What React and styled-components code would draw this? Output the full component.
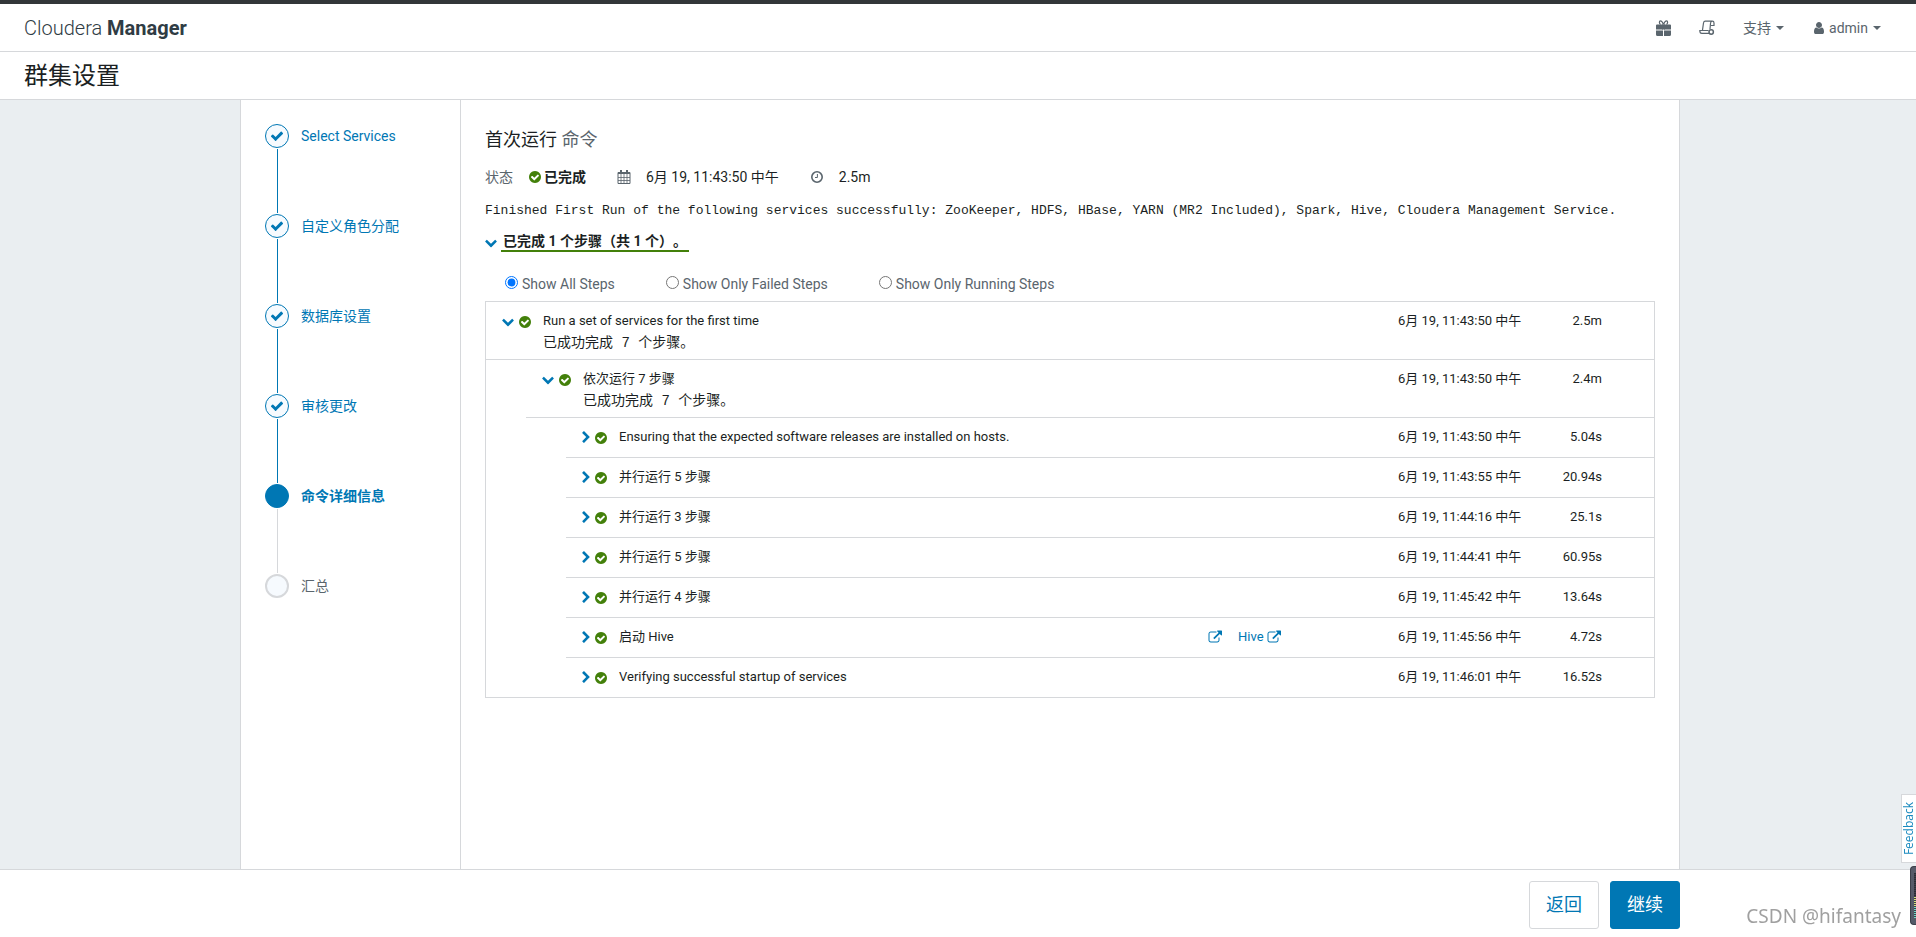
import React, { useState } from "react"
import styled, { createGlobalStyle } from "styled-components";

const GlobalStyle = createGlobalStyle`
    body {
        margin: 0;
        background: #fff;
        color: #1b1f23;
        font-family: Roboto, "Noto Sans CJK SC", sans-serif;
        font-size: 13px;
        line-height: 20px;
        text-spacing-trim: space-all;
    }

    *, *::before, *::after {
        box-sizing: border-box;
    }
`;

const Page = styled.div`
    min-height: 100vh;
    display: flex;
    flex-direction: column;
    border-top: 4px solid #323639;
`;

const TopBar = styled.header`
    display: flex;
    align-items: center;
    justify-content: space-between;
    height: 48px;
    padding: 0 35px 0 24px;
    border-bottom: 1px solid #d6d8db;
`;

const Brand = styled.div`
    font-size: 20px;
    font-weight: 300;
    line-height: 24px;
    color: #2f3c44;

    b {
        font-weight: 700;
    }
`;

const TopMenu = styled.nav`
    display: flex;
    align-items: center;
    gap: 28px;
`;

const MenuButton = styled.button`
    display: flex;
    align-items: center;
    gap: 5px;
    padding: 0;
    border: 0;
    background: none;
    color: #5a656d;
    font: inherit;
    font-size: 14px;
    cursor: pointer;
`;

const Caret = styled.span`
    width: 8px;
    border: 4px solid transparent;
    border-top-color: #5a656d;
    border-bottom: 0;
`;

const UserName = styled.span`
    display: flex;
    align-items: center;
    gap: 3px;
`;

const PageTitle = styled.h1`
    margin: 0;
    height: 48px;
    padding: 0 24px;
    border-bottom: 1px solid #d6d8db;
    font-size: 24px;
    font-weight: 400;
    line-height: 48px;
`;

const Body = styled.div`
    flex: 1;
    display: flex;
    padding: 0 236px 0 240px;
    background: #eaeef1;
`;

const Wizard = styled.main`
    flex: 1;
    display: flex;
    min-width: 0;
    background: #fff;
    border: solid #d6d8db;
    border-width: 0 1px;
`;

const StepNav = styled.ol`
    flex: 0 0 220px;
    margin: 0;
    padding: 24px;
    border-right: 1px solid #d6d8db;
    list-style: none;
`;

const StepItem = styled.li`
    display: grid;
    grid-template-columns: 24px 1fr;
    grid-template-rows: 24px 66px;
    column-gap: 12px;
    align-items: center;
    justify-items: start;
`;

const StepDot = styled.span`
    display: flex;
    align-items: center;
    justify-content: center;
    width: 24px;
    height: 24px;
    border-radius: 50%;
    border: ${(props) => (props.$state === "todo" ? "2px solid #d6d8db" : "1px solid #0077b4")};
    background: ${(props) => (props.$state === "current" ? "#0077b4" : "#f6fafe")};
    color: #0077b4;
`;

const StepLine = styled.span`
    justify-self: center;
    width: 1px;
    height: 64px;
    background: ${(props) => (props.$done ? "#0077b4" : "#d6d8db")};
`;

const StepLink = styled.a`
    color: ${(props) => (props.$state === "todo" ? "#5a656d" : "#0077b4")};
    font-size: 14px;
    font-weight: ${(props) => (props.$state === "current" ? 700 : 400)};
    text-decoration: none;
`;

const Content = styled.section`
    flex: 1;
    min-width: 0;
    padding: 28px 24px 24px;
`;

const Heading = styled.h2`
    margin: 0 0 15px;
    font-size: 18px;
    font-weight: 400;
    line-height: 24px;

    small {
        font-size: inherit;
        color: #5a656d;
    }
`;

const StatusRow = styled.div`
    display: flex;
    align-items: center;
    height: 20px;
    font-size: 14px;
`;

const StatusLabel = styled.span`
    margin-right: 15px;
    color: #5a656d;
`;

const StatusItem = styled.span`
    display: flex;
    align-items: center;
    gap: ${(props) => (props.$bold ? "2px" : "15px")};
    margin-right: 31px;
    font-weight: ${(props) => (props.$bold ? 700 : 400)};
`;

const Message = styled.p`
    margin: 14px 0 11px;
    font-family: "Liberation Mono", "Noto Sans CJK SC", monospace;
    font-size: 13px;
`;

const Summary = styled.button`
    display: flex;
    align-items: center;
    gap: 4px;
    height: 20px;
    padding: 0;
    border: 0;
    background: none;
    color: #1b1f23;
    font: inherit;
    font-size: 14px;
    font-weight: 700;
    line-height: 18px;
    cursor: pointer;
`;

const SummaryText = styled.span`
    height: 20px;
    padding: 0 2px;
    border-bottom: 2px solid #43800a;
`;

const Filters = styled.div`
    display: flex;
    gap: 51px;
    padding: 22px 0 7px 20px;
`;

const FilterLabel = styled.label`
    display: flex;
    align-items: center;
    gap: 4px;
    height: 20px;
    font-size: 14px;
    color: #5a656d;

    input {
        width: 13px;
        height: 13px;
        margin: 0 0 3px;
    }
`;

const StepList = styled.div`
    border: 1px solid #d6d8db;
`;

const Row = styled.div`
    display: flex;
    align-items: flex-start;
    height: ${(props) => (props.$detail ? "58px" : "40px")};
    margin-left: ${(props) => props.$level * 40}px;
    padding: 9px 52px 0 16px;
    border-bottom: 1px solid #d6d8db;

    &:last-child {
        height: 39px;
        border-bottom: 0;
    }
`;

const Toggle = styled.button`
    display: flex;
    align-items: center;
    gap: 4px;
    height: 20px;
    margin-right: 11px;
    padding: 0;
    border: 0;
    background: none;
    color: #0077b4;
    cursor: pointer;

    svg:last-child {
        margin-top: 2px;
    }
`;

const RowText = styled.div`
    flex: 1;
    min-width: 0;
`;

const RowDetail = styled.div`
    font-family: "Liberation Mono", "Noto Sans CJK SC", monospace;
    font-size: 14px;
    line-height: 24px;
`;

const RowLinks = styled.div`
    display: flex;
    gap: 16px;
    width: 190px;
`;

const RowLink = styled.a`
    display: flex;
    align-items: center;
    gap: 3px;
    color: #0077b4;
    text-decoration: none;
`;

const RowDate = styled.div`
    width: 124px;
`;

const RowDuration = styled.div`
    width: 80px;
    text-align: right;
`;

const Footer = styled.footer`
    display: flex;
    justify-content: flex-end;
    gap: 11px;
    height: 68px;
    padding: 11px 236px 0 0;
    border-top: 1px solid #d6d8db;
`;

const FooterButton = styled.button`
    width: 70px;
    height: 48px;
    padding: 0;
    border: 1px solid ${(props) => (props.$primary ? "#0077b4" : "#d6d8db")};
    border-radius: 3px;
    background: ${(props) => (props.$primary ? "#0077b4" : "#fff")};
    color: ${(props) => (props.$primary ? "#fff" : "#0077b4")};
    font: inherit;
    font-size: 18px;
    cursor: pointer;
`;

const Feedback = styled.button`
    position: fixed;
    right: 0;
    bottom: 74px;
    width: 15px;
    height: 69px;
    padding: 0;
    border: 1px solid #d6d8db;
    border-right: 0;
    background: #fff;
    color: #1a8abf;
    font: 12px/14px "Open Sans", sans-serif;
    writing-mode: sideways-lr;
`;

const Meter = styled.div`
    position: fixed;
    right: 0;
    bottom: 12px;
    width: 6px;
    height: 59px;
    padding: 6px 0 6px 3px;
    border: 1px solid #3c3f4a;
    border-right: 0;
    border-radius: 4px 0 0 4px;
    background: #555a68;

    &::before {
        content: "";
        display: block;
        height: 100%;
        background:
            repeating-linear-gradient(transparent 0 1px, #3c3f4a 1px 2px),
            linear-gradient(#2b2d35 0 52%, #d3e07a 52% 75%, #6fd6c2 75%);
    }
`;

const Watermark = styled.div`
    position: fixed;
    right: 15px;
    bottom: 8px;
    font: 19px/26px "Noto Sans", sans-serif;
    color: #a0a0a0;
`;

const Svg = ({ size = 14, width = size, box = "0 0 1792 1792", d, color = "currentColor" }) => (
    <svg width={width} height={size} viewBox={box} fill={color} aria-hidden="true">
        <path d={d} />
    </svg>
);

const CheckIcon = () => (
    <Svg d="M1671 566q0 40-28 68l-724 724-136 136q-28 28-68 28t-68-28l-136-136-362-362q-28-28-28-68t28-68l136-136q28-28 68-28t68 28l294 295 656-657q28-28 68-28t68 28l136 136q28 28 28 68z" />
);

const CheckCircle = () => (
    <Svg
        color="#43800a"
        d="M1412 734q0-28-18-46l-91-90q-19-19-45-19t-45 19l-408 407-226-226q-19-19-45-19t-45 19l-91 90q-18 18-18 46 0 27 18 45l362 362q19 19 45 19 27 0 46-19l543-543q18-18 18-45zm252 162q0 209-103 385.5t-279.5 279.5-385.5 103-385.5-103-279.5-279.5-103-385.5 103-385.5 279.5-279.5 385.5-103 385.5 103 279.5 279.5 103 385.5z"
    />
);

const UserIcon = () => (
    <Svg d="M1536 1399q0 109-62.5 187t-150.5 78h-854q-88 0-150.5-78t-62.5-187q0-85 8.5-160.5t31.5-152 58.5-131 94-89 134.5-34.5q131 128 313 128t313-128q76 0 134.5 34.5t94 89 58.5 131 31.5 152 8.5 160.5zm-256-887q0 159-112.5 271.5t-271.5 112.5-271.5-112.5-112.5-271.5 112.5-271.5 271.5-112.5 271.5 112.5 112.5 271.5z" />
);

const LinkIcon = () => (
    <Svg d="M1472 989v320q0 119-84.5 203.5t-203.5 84.5h-832q-119 0-203.5-84.5t-84.5-203.5v-832q0-119 84.5-203.5t203.5-84.5h704q14 0 23 9t9 23v64q0 14-9 23t-23 9h-704q-66 0-113 47t-47 113v832q0 66 47 113t113 47h832q66 0 113-47t47-113v-320q0-14 9-23t23-9h64q14 0 23 9t9 23zm320-864v512q0 26-19 45t-45 19-45-19l-176-176-652 652q-10 10-23 10t-23-10l-114-114q-10-10-10-23t10-23l652-652-176-176q-19-19-19-45t19-45 45-19h512q26 0 45 19t19 45z" />
);

const Chevron = ({ open }) => (
    open ? (
        <Svg
            size={13}
            width={12}
            box="68 0 1656 1792"
            color="#0077b4"
            d="M1683 808l-742 741q-19 19-45 19t-45-19l-742-741q-19-19-19-45.5t19-45.5l166-165q19-19 45-19t45 19l531 531 531-531q19-19 45-19t45 19l166 165q19 19 19 45.5t-19 45.5z"
        />
    ) : (
        <Svg
            size={13}
            width={8}
            box="312 0 1104 1792"
            color="#0077b4"
            d="M1363 877l-742 742q-19 19-45 19t-45-19l-166-166q-19-19-19-45t19-45l531-531-531-531q-19-19-19-45t19-45l166-166q19-19 45-19t45 19l742 742q19 19 19 45t-19 45z"
        />
    )
);

const CalendarIcon = () => (
    <svg width="14" height="14" viewBox="0 0 14 14" fill="none" stroke="#5a656d" aria-hidden="true">
        <path d="M1 2.500h12v11H1z" />
        <path strokeWidth="2" d="M1 3h12" />
        <path strokeWidth="2" d="M4 0v3.500M10 0v3.500" />
        <path strokeWidth="0.8" d="M1 7.500h12M1 10.500h12M4 4v9.500M7 4v9.500M10 4v9.500" />
    </svg>
);

const ClockIcon = () => (
    <svg width="14" height="14" viewBox="0 0 14 14" fill="none" stroke="#5a656d" aria-hidden="true">
        <circle cx="7" cy="7" r="5.2" strokeWidth="1.6" />
        <path d="M7.4 4v3.5H5" />
    </svg>
);

const GiftIcon = () => (
    <svg width="15" height="16" viewBox="0 0 15 16" fill="#5a656d" aria-hidden="true">
        <path fill="none" stroke="#5a656d" strokeWidth="1.200" d="M7.500 4.500C6.500 2 5.500.8 4.500.8 3 .8 3 3.500 4.500 4.500M7.500 4.500C8.500 2 9.500.8 10.500.8c1.500 0 1.500 2.700 0 3.700" />
        <path d="M1 4.500h6v5H0v-4q0-1 1-1zM8 4.500h6q1 0 1 1v4H8zM0 10.500h7V16H1.500Q0 16 0 14.500zM8 10.500h7v4q0 1.500-1.500 1.500H8z" />
        <path d="M6 4.500h3v5H6z" />
    </svg>
);

const ScrollIcon = () => (
    <svg width="16" height="16" viewBox="0 0 16 16" fill="none" stroke="#5a656d" strokeWidth="1.200" aria-hidden="true">
        <path d="M3.500 10L4.500 3Q4.800 1.200 6.300 1.200H13.300Q15 1.200 15 3V5.500H12M13 1.200Q11.600 1.500 11.500 3.500L11 9" />
        <path d="M9.500 10.500H.8Q.8 13.400 2.800 13.400H10.500" />
        <circle cx="12.2" cy="12" r="2.2" strokeWidth="1.500" />
    </svg>
);

const steps = [
    { label: "Select Services", state: "done" },
    { label: "自定义角色分配", state: "done" },
    { label: "数据库设置", state: "done" },
    { label: "审核更改", state: "done" },
    { label: "命令详细信息", state: "current" },
    { label: "汇总", state: "todo" },
];

const filters = ["Show All Steps", "Show Only Failed Steps", "Show Only Running Steps"];

const rows = [
    { level: 0, open: true, text: "Run a set of services for the first time", detail: "已成功完成 7 个步骤。", time: "11:43:50", duration: "2.5m" },
    { level: 1, open: true, text: "依次运行 7 步骤", detail: "已成功完成 7 个步骤。", time: "11:43:50", duration: "2.4m" },
    { level: 2, text: "Ensuring that the expected software releases are installed on hosts.", time: "11:43:50", duration: "5.04s" },
    { level: 2, text: "并行运行 5 步骤", time: "11:43:55", duration: "20.94s" },
    { level: 2, text: "并行运行 3 步骤", time: "11:44:16", duration: "25.1s" },
    { level: 2, text: "并行运行 5 步骤", time: "11:44:41", duration: "60.95s" },
    { level: 2, text: "并行运行 4 步骤", time: "11:45:42", duration: "13.64s" },
    { level: 2, text: "启动 Hive", link: "Hive", time: "11:45:56", duration: "4.72s" },
    { level: 2, text: "Verifying successful startup of services", time: "11:46:01", duration: "16.52s" },
];

function App() {
    const [filter, setFilter] = useState(filters[0]);

    return (
        <Page>
            <GlobalStyle />
            <TopBar>
                <Brand>Cloudera <b>Manager</b></Brand>
                <TopMenu>
                    <MenuButton aria-label="Gift"><GiftIcon /></MenuButton>
                    <MenuButton aria-label="Commands"><ScrollIcon /></MenuButton>
                    <MenuButton>支持<Caret /></MenuButton>
                    <MenuButton><UserName><UserIcon />admin</UserName><Caret /></MenuButton>
                </TopMenu>
            </TopBar>
            <PageTitle>群集设置</PageTitle>
            <Body>
                <Wizard>
                    <StepNav>
                        {steps.map((step, i) => (
                            <StepItem key={step.label}>
                                <StepDot $state={step.state}>{step.state === "done" && <CheckIcon />}</StepDot>
                                <StepLink href="#" $state={step.state}>{step.label}</StepLink>
                                {i < steps.length - 1 && <StepLine $done={step.state === "done"} />}
                            </StepItem>
                        ))}
                    </StepNav>
                    <Content>
                        <Heading>首次运行 <small>命令</small></Heading>
                        <StatusRow>
                            <StatusLabel>状态</StatusLabel>
                            <StatusItem $bold><CheckCircle />已完成</StatusItem>
                            <StatusItem><CalendarIcon />6月 19, 11:43:50 中午</StatusItem>
                            <StatusItem><ClockIcon />2.5m</StatusItem>
                        </StatusRow>
                        <Message>
                            Finished First Run of the following services successfully: ZooKeeper, HDFS, HBase, YARN (MR2 Included), Spark, Hive, Cloudera Management Service.
                        </Message>
                        <Summary>
                            <Chevron open />
                            <SummaryText>已完成 1 个步骤（共 1 个）。</SummaryText>
                        </Summary>
                        <Filters>
                            {filters.map((name) => (
                                <FilterLabel key={name}>
                                    <input type="radio" name="filter" checked={filter === name} onChange={() => setFilter(name)} />
                                    {name}
                                </FilterLabel>
                            ))}
                        </Filters>
                        <StepList>
                            {rows.map((row, i) => (
                                <Row key={i} $level={row.level} $detail={row.detail}>
                                    <Toggle aria-label={row.text}><Chevron open={row.open} /><CheckCircle /></Toggle>
                                    <RowText>
                                        {row.text}
                                        {row.detail && <RowDetail>{row.detail}</RowDetail>}
                                    </RowText>
                                    {row.link && (
                                        <RowLinks>
                                            <RowLink href="#" aria-label="Details"><LinkIcon /></RowLink>
                                            <RowLink href="#">{row.link}<LinkIcon /></RowLink>
                                        </RowLinks>
                                    )}
                                    <RowDate>6月 19, {row.time} 中午</RowDate>
                                    <RowDuration>{row.duration}</RowDuration>
                                </Row>
                            ))}
                        </StepList>
                    </Content>
                </Wizard>
            </Body>
            <Footer>
                <FooterButton>返回</FooterButton>
                <FooterButton $primary>继续</FooterButton>
            </Footer>
            <Feedback>Feedback</Feedback>
            <Meter />
            <Watermark>CSDN @hifantasy</Watermark>
        </Page>
    )
};

export default App
